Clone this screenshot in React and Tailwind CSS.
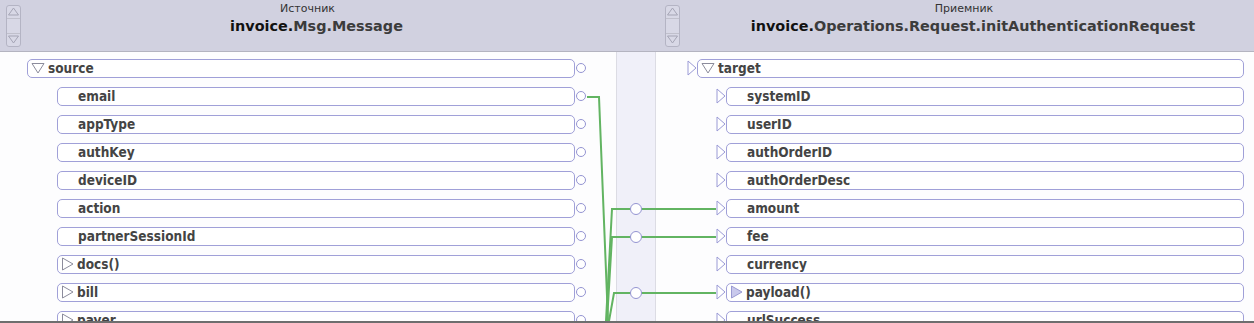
import React from 'react';

const rowFont = { fontFamily: '"DejaVu Sans Condensed", "Liberation Sans", sans-serif' };

const leftRows = [
  { name: 'source', root: true, exp: 'down' },
  { name: 'email' },
  { name: 'appType' },
  { name: 'authKey' },
  { name: 'deviceID' },
  { name: 'action' },
  { name: 'partnerSessionId' },
  { name: 'docs()', exp: 'right' },
  { name: 'bill', exp: 'right' },
  { name: 'payer', exp: 'right' },
];

const rightRows = [
  { name: 'target', root: true, exp: 'down' },
  { name: 'systemID' },
  { name: 'userID' },
  { name: 'authOrderID' },
  { name: 'authOrderDesc' },
  { name: 'amount' },
  { name: 'fee' },
  { name: 'currency' },
  { name: 'payload()', exp: 'filled' },
  { name: 'urlSuccess' },
];

const Expander = ({ kind }) => {
  if (kind === 'down')
    return (
      <svg width="14" height="12" viewBox="0 0 14 12" className="shrink-0">
        <path d="M1 1.5 H13 L7 11 Z" fill="#fff" stroke="#8c8c9c" strokeWidth="1" />
      </svg>
    );
  if (kind === 'filled')
    return (
      <svg width="13" height="14" viewBox="0 0 13 14" className="shrink-0">
        <path d="M1.5 1 L12 7 L1.5 13 Z" fill="#c9c9ec" stroke="#9a9ad2" strokeWidth="1" />
      </svg>
    );
  return (
    <svg width="13" height="14" viewBox="0 0 13 14" className="shrink-0">
      <path d="M1.5 1 L12 7 L1.5 13 Z" fill="#fff" stroke="#8c8c9c" strokeWidth="1" />
    </svg>
  );
};

const InPort = () => (
  <svg width="10" height="16" viewBox="0 0 10 16" className="shrink-0">
    <path d="M1 1 L9 8 L1 15 Z" fill="#fff" stroke="#9a9ad6" strokeWidth="1" />
  </svg>
);

const OutPort = () => (
  <div className="w-[10px] h-[10px] rounded-full border border-[#9494d2] bg-white shrink-0 ml-[1px]" />
);

const Label = ({ row }) =>
  row.exp ? (
    <div className="flex items-center">
      <Expander kind={row.exp} />
      <span className="ml-[3px] text-[13.5px] font-bold text-[#444]" style={rowFont}>{row.name}</span>
    </div>
  ) : (
    <span className="ml-[17px] text-[13.5px] font-bold text-[#444]" style={rowFont}>{row.name}</span>
  );

const LeftRow = ({ row }) => (
  <div className={`h-[28px] flex items-center ${row.root ? 'pl-[27px]' : 'pl-[57px]'} pr-[30px]`}>
    <div className="flex-1 h-[19px] rounded-[5px] border border-[#a0a0d8] bg-white flex items-center pl-[3px]">
      <Label row={row} />
    </div>
    <OutPort />
  </div>
);

const RightRow = ({ row }) => (
  <div className={`h-[28px] flex items-center ${row.root ? 'pl-[31px]' : 'pl-[60px]'} pr-[10px]`}>
    <InPort />
    <div className="flex-1 h-[19px] rounded-[5px] border border-[#a0a0d8] bg-white flex items-center pl-[3px]">
      <Label row={row} />
    </div>
  </div>
);

const Spinner = () => (
  <div className="w-[15px] h-[42px] rounded-[3px] border border-[#b4b4c4] bg-[#d8d8e6] flex flex-col shrink-0">
    <div className="h-[13px] flex items-center justify-center border-b border-[#c0c0cc]">
      <svg width="11" height="9" viewBox="0 0 11 9">
        <path d="M0.5 8 L5.5 1 L10.5 8 Z" fill="none" stroke="#a4a4b4" strokeWidth="1" />
      </svg>
    </div>
    <div className="flex-1" />
    <div className="h-[13px] flex items-center justify-center border-t border-[#c0c0cc]">
      <svg width="11" height="9" viewBox="0 0 11 9">
        <path d="M0.5 1 L5.5 8 L10.5 1 Z" fill="none" stroke="#a4a4b4" strokeWidth="1" />
      </svg>
    </div>
  </div>
);

const HeaderTitle = ({ label, ns, rest, offset }) => (
  <div className={`flex-1 self-start flex flex-col items-center pt-[2px] ${offset}`}>
    <div className="text-[11px] text-[#333] leading-[14px] mr-[18px]" style={{ fontFamily: '"DejaVu Sans", sans-serif' }}>{label}</div>
    <div className="text-[14.4px] font-bold leading-[18px] mt-[1px] whitespace-nowrap" style={{ fontFamily: '"DejaVu Sans", sans-serif' }}>
      <span className="text-[#111]">{ns}</span>
      <span className="text-[#3c3c3c]">{rest}</span>
    </div>
  </div>
);

export default function App() {
  return (
    <div className="w-[1254px] h-[323px] flex flex-col bg-white overflow-hidden relative">
      <div className="h-[52px] flex bg-[#d1d1e0] border-b border-[#b4b4c0] shrink-0">
        <div className="w-[656px] flex items-center pl-[6px]">
          <Spinner />
          <HeaderTitle label="Источник" ns="invoice." rest="Msg.Message" offset="pr-[44px]" />
        </div>
        <div className="flex-1 flex items-center pl-[9px]">
          <Spinner />
          <HeaderTitle label="Приемник" ns="invoice." rest="Operations.Request.initAuthenticationRequest" offset="pl-[12px]" />
        </div>
      </div>
      <div className="flex-1 flex border-b-2 border-[#6e6e6e] overflow-hidden bg-[#fdfdfe]">
        <div className="w-[616px] pt-[2px] shrink-0">
          {leftRows.map((r) => (
            <LeftRow key={r.name} row={r} />
          ))}
        </div>
        <div className="w-[40px] shrink-0 bg-[#f0f0f9] border-x border-[#dcdce4]" />
        <div className="flex-1 pt-[2px]">
          {rightRows.map((r) => (
            <RightRow key={r.name} row={r} />
          ))}
        </div>
      </div>
      <svg className="absolute left-0 top-0 pointer-events-none" width="1254" height="321" viewBox="0 0 1254 321">
        <g fill="none" stroke="#62b462" strokeWidth="2">
          <path d="M587 97 H599 L608 321" />
          <path d="M716 209 H612 L606 321" />
          <path d="M716 237 H612 L607 321" />
          <path d="M716 293 H614 L609 321" />
        </g>
        <g fill="#fff" stroke="#9494d2" strokeWidth="1">
          <circle cx="636" cy="209" r="5.5" />
          <circle cx="636" cy="237" r="5.5" />
          <circle cx="636" cy="293" r="5.5" />
        </g>
      </svg>
    </div>
  );
}
